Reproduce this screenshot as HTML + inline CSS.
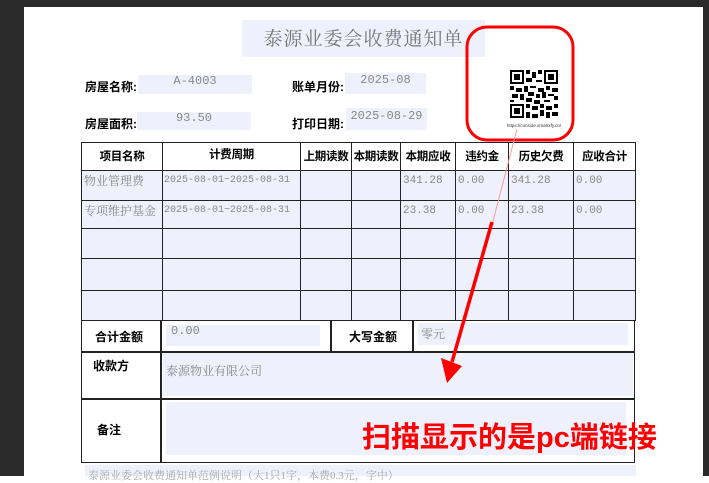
<!DOCTYPE html>
<html><head><meta charset="utf-8"><style>
*{margin:0;padding:0;box-sizing:border-box}
body{width:709px;height:476px;overflow:hidden;background:#fff;position:relative;font-family:"Liberation Serif","Noto Serif CJK SC",serif}
.a{position:absolute}
.bx{position:absolute;background:#eef0fc}
.lb{position:absolute;font-family:"Liberation Sans","Noto Sans CJK SC",sans-serif;font-weight:bold;font-size:12px;color:#000}
.v{position:absolute;font-size:12px;color:#888;font-family:"Liberation Mono","Noto Serif CJK SC",monospace}
table{position:absolute;left:81px;top:142px;border-collapse:collapse;width:554px;table-layout:fixed}
td{border:1.5px solid #222;font-size:11px;color:#888;vertical-align:top;padding:0;white-space:nowrap;overflow:hidden;font-family:"Liberation Mono","Noto Serif CJK SC",monospace;line-height:14px}
td.h{font-family:"Liberation Sans","Noto Sans CJK SC",sans-serif;font-weight:bold;color:#000;text-align:center;vertical-align:middle;background:#fff;font-size:11.5px;letter-spacing:-0.3px}
td.d{background:#eef0fc;padding:3px 2px 0}
td.p{font-size:10px;padding-left:1px}
</style></head><body>
<div class="a" style="left:0;top:0;width:709px;height:7px;background:#2b2b2b"></div>
<div class="a" style="left:0;top:0;width:24px;height:476px;background:#2b2b2b"></div>
<div class="a" style="left:703px;top:0;width:6px;height:476px;background:#2b2b2b"></div>
<div class="bx" style="left:242px;top:20px;width:243px;height:37px"></div>
<div class="a" style="left:242px;top:24px;width:243px;text-align:center;font-size:19px;color:#777;letter-spacing:1px">泰源业委会收费通知单</div>

<div class="lb" style="left:85px;top:78px">房屋名称:</div>
<div class="bx" style="left:138px;top:75px;width:114px;height:19px"></div>
<div class="v" style="left:138px;top:74px;width:114px;text-align:center">A-4003</div>
<div class="lb" style="left:292px;top:78px">账单月份:</div>
<div class="bx" style="left:345px;top:73px;width:81px;height:21px"></div>
<div class="v" style="left:345px;top:73px;width:81px;text-align:center">2025-08</div>

<div class="lb" style="left:85px;top:115px">房屋面积:</div>
<div class="bx" style="left:137px;top:112px;width:114px;height:18px"></div>
<div class="v" style="left:137px;top:111px;width:114px;text-align:center">93.50</div>
<div class="lb" style="left:292px;top:115px">打印日期:</div>
<div class="bx" style="left:346px;top:108px;width:81px;height:22px"></div>
<div class="v" style="left:346px;top:109px;width:81px;text-align:center">2025-08-29</div>

<table>
<colgroup><col style="width:81px"><col style="width:138px"><col style="width:51px"><col style="width:49px"><col style="width:55px"><col style="width:53px"><col style="width:65px"><col style="width:62px"></colgroup>
<tr style="height:28px"><td class="h">项目名称</td><td class="h" style="vertical-align:top;padding-top:5px">计费周期</td><td class="h">上期读数</td><td class="h">本期读数</td><td class="h">本期应收</td><td class="h">违约金</td><td class="h">历史欠费</td><td class="h">应收合计</td></tr>
<tr style="height:30px"><td class="d" style="font-family:'Liberation Serif','Noto Serif CJK SC',serif;font-size:12px">物业管理费</td><td class="d p">2025-08-01~2025-08-31</td><td class="d"></td><td class="d"></td><td class="d">341.28</td><td class="d">0.00</td><td class="d">341.28</td><td class="d">0.00</td></tr>
<tr style="height:28px"><td class="d" style="font-family:'Liberation Serif','Noto Serif CJK SC',serif;font-size:12px">专项维护基金</td><td class="d p">2025-08-01~2025-08-31</td><td class="d"></td><td class="d"></td><td class="d">23.38</td><td class="d">0.00</td><td class="d">23.38</td><td class="d">0.00</td></tr>
<tr style="height:30px"><td class="d"></td><td class="d"></td><td class="d"></td><td class="d"></td><td class="d"></td><td class="d"></td><td class="d"></td><td class="d"></td></tr>
<tr style="height:32px"><td class="d"></td><td class="d"></td><td class="d"></td><td class="d"></td><td class="d"></td><td class="d"></td><td class="d"></td><td class="d"></td></tr>
<tr style="height:30px"><td class="d"></td><td class="d"></td><td class="d"></td><td class="d"></td><td class="d"></td><td class="d"></td><td class="d"></td><td class="d"></td></tr>
</table>
<div class="a" style="left:81px;top:320px;width:554px;height:143px;border:1.5px solid #222;background:#fff"></div>
<div class="a" style="left:160px;top:320px;width:1.5px;height:143px;background:#222"></div>
<div class="a" style="left:81px;top:351px;width:554px;height:1.5px;background:#222"></div>
<div class="a" style="left:81px;top:398px;width:554px;height:1.5px;background:#222"></div>
<div class="a" style="left:330px;top:320px;width:1.5px;height:31px;background:#222"></div>
<div class="a" style="left:412px;top:320px;width:1.5px;height:31px;background:#222"></div>
<div class="lb" style="left:95px;top:328px">合计金额</div>
<div class="bx" style="left:166px;top:325px;width:154px;height:21px"></div>
<div class="v" style="left:171px;top:324px">0.00</div>
<div class="lb" style="left:349px;top:328px">大写金额</div>
<div class="bx" style="left:418px;top:323px;width:210px;height:22px"></div>
<div class="v" style="left:421px;top:325px">零元</div>
<div class="lb" style="left:93px;top:357px">收款方</div>
<div class="bx" style="left:163px;top:353px;width:470px;height:43px"></div>
<div class="v" style="left:166px;top:362px;font-family:'Liberation Serif','Noto Serif CJK SC',serif">泰源物业有限公司</div>
<div class="lb" style="left:97px;top:421px">备注</div>
<div class="bx" style="left:166px;top:402px;width:460px;height:53px"></div>
<div class="bx" style="left:85px;top:465px;width:551px;height:11px"></div>
<div class="v" style="left:88px;top:467px;font-size:11px;color:#aaa;font-family:'Liberation Serif','Noto Serif CJK SC',serif">泰源业委会收费通知单范例说明（大1只1字，本费0.3元，字中）</div>

<svg class="a" style="left:0;top:0" width="709" height="476">
<rect x="467" y="27" width="106" height="113" rx="20" fill="none" stroke="#f00" stroke-width="3"/>
<g fill="#000">
<rect x="510" y="70" width="14" height="14"/><rect x="512" y="72" width="10" height="10" fill="#fff"/><rect x="514" y="74" width="6" height="6"/>
<rect x="544" y="70" width="14" height="14"/><rect x="546" y="72" width="10" height="10" fill="#fff"/><rect x="548" y="74" width="6" height="6"/>
<rect x="510" y="104" width="14" height="14"/><rect x="512" y="106" width="10" height="10" fill="#fff"/><rect x="514" y="108" width="6" height="6"/>
<path d="M526 70h4v4h-4zM532 72h4v6h-4zM538 70h4v4h-4zM526 78h6v4h-6zM536 80h6v2h-6zM510 86h4v4h-4zM516 88h6v4h-6zM524 86h4v6h-4zM530 86h6v2h-6zM538 88h6v4h-6zM546 86h4v4h-4zM552 88h6v4h-6zM512 94h6v4h-6zM520 94h4v6h-4zM528 92h6v4h-6zM536 94h4v4h-4zM542 92h4v6h-4zM548 94h6v2h-6zM554 96h4v4h-4zM510 100h4v2h-4zM526 98h6v4h-6zM534 100h6v4h-6zM544 100h6v2h-6zM526 104h4v4h-4zM532 106h6v4h-6zM540 104h4v4h-4zM546 106h6v4h-6zM554 104h4v4h-4zM526 112h4v6h-4zM532 114h6v4h-6zM540 110h4v6h-4zM546 112h4v6h-4zM552 112h6v4h-6z"/>
</g>
<text x="534" y="127" font-size="4.5" fill="#333" text-anchor="middle" font-family="Liberation Sans">https://console.smartxfy.cn/</text>
<line x1="517" y1="129" x2="492" y2="225" stroke="#f99" stroke-width="1"/>
<line x1="492" y1="222" x2="452" y2="362" stroke="#f00" stroke-width="3.5"/>
<polygon points="441,358 462,366 447,383" fill="#f00"/>
<text x="362" y="447" font-size="29" font-weight="bold" fill="#f00" font-family="Liberation Sans,Noto Sans CJK SC,sans-serif">扫描显示的是pc端链接</text>
</svg>
</body></html>
